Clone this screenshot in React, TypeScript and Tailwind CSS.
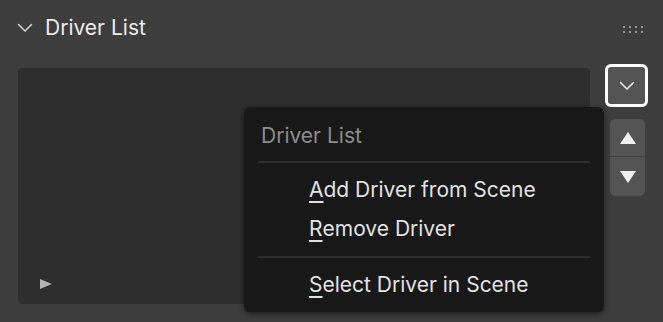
import React from "react";

function Chevron({ className = "" }: { className?: string }) {
  return (
    <svg viewBox="0 0 16 10" className={className} fill="none" stroke="currentColor" strokeWidth="1.6" strokeLinecap="round" strokeLinejoin="round">
      <path d="M1.5 1.5 L8 8 L14.5 1.5" />
    </svg>
  );
}

function Item({ first, rest, h = "h-[39px]" }: { first: string; rest: string; h?: string }) {
  return (
    <div className={`${h} flex items-center pl-[65px] text-[21px] text-[#e2e2e2]`}>
      <span className="underline underline-offset-[4px] decoration-[1.5px]">{first}</span>
      <span>{rest}</span>
    </div>
  );
}

export default function App() {
  return (
    <div className="w-[663px] h-[322px] bg-[#3d3d3d] relative overflow-hidden" style={{ fontFamily: "Inter, 'Noto Sans', sans-serif" }}>
      <div className="h-[54px] flex items-center pl-[17px] pr-[20px] pt-[2px]">
        <Chevron className="w-[16px] h-[10px] text-[#cfcfcf]" />
        <span className="ml-[12px] text-[21px] text-[#ececec]">Driver List</span>
        <div className="ml-auto grid grid-cols-4 gap-x-[4px] gap-y-[3px] mt-[2px]">
          {Array.from({ length: 8 }).map((_, i) => (
            <div key={i} className="w-[2px] h-[2px] bg-[#959595]" />
          ))}
        </div>
      </div>
      <div className="flex pl-[18px] pt-[14px]">
        <div className="w-[572px] h-[236px] bg-[#2e2e2e] rounded-[4px] relative flex items-end pl-[22px] pb-[15px]">
          <svg viewBox="0 0 12 10" className="w-[12px] h-[10px]">
            <path d="M0 0 L12 5 L0 10 Z" fill="#b4b4b4" />
          </svg>
        </div>
        <div className="ml-[15px] flex flex-col">
          <div className="w-[43px] h-[43px] -mt-[4px] rounded-[6px] border-[3px] border-white bg-[#545454] flex items-center justify-center">
            <Chevron className="w-[16px] h-[10px] text-[#e8e8e8]" />
          </div>
          <div className="mt-[12px] ml-[5px] w-[35px] flex flex-col rounded-[5px] overflow-hidden">
            <div className="h-[37px] bg-[#545454] flex items-center justify-center">
              <svg viewBox="0 0 16 12" className="w-[16px] h-[12px]"><path d="M8 0 L16 12 L0 12 Z" fill="#f0f0f0" /></svg>
            </div>
            <div className="h-[1px] bg-[#3d3d3d]" />
            <div className="h-[39px] bg-[#545454] flex items-center justify-center">
              <svg viewBox="0 0 16 12" className="w-[16px] h-[12px]"><path d="M0 0 L16 0 L8 12 Z" fill="#f0f0f0" /></svg>
            </div>
          </div>
        </div>
      </div>
      <div className="absolute left-[244px] top-[107px] w-[360px] h-[205px] bg-[#181818] rounded-[6px] shadow-[0_2px_6px_rgba(0,0,0,0.5)] flex flex-col">
        <div className="h-[55px] flex items-center pl-[17px] pt-[4px] text-[21px] text-[#8c8c8c]">Driver List</div>
        <div className="mx-[14px] h-[2px] bg-[#2d2d2d]" />
        <div className="pt-[8px]">
          <Item first="A" rest="dd Driver from Scene" />
          <Item first="R" rest="emove Driver" />
        </div>
        <div className="mx-[14px] mt-[7px] h-[2px] bg-[#2d2d2d]" />
        <Item first="S" rest="elect Driver in Scene" h="h-[56px]" />
      </div>
    </div>
  );
}
